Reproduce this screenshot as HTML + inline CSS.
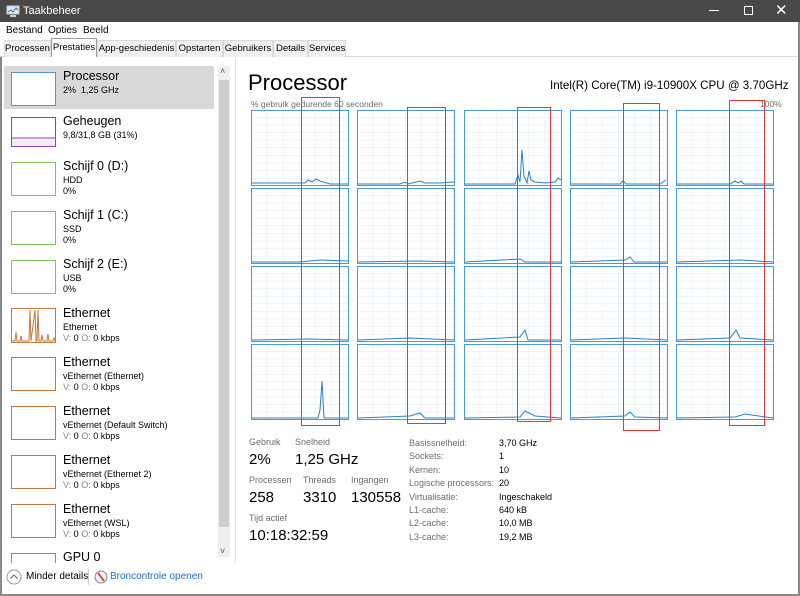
<!DOCTYPE html>
<html><head><meta charset="utf-8"><style>
*{margin:0;padding:0;box-sizing:border-box}
body{width:800px;height:596px;overflow:hidden;background:#fff;font-family:"Segoe UI","Liberation Sans",sans-serif;color:#000;position:relative}
.a{position:absolute;white-space:nowrap}
#title{left:0;top:0;width:800px;height:22px;background:#4a4847;color:#fff;font-size:11px}
#menu{top:22px;left:0;width:800px;height:16px;font-size:10px}
.tab{position:absolute;top:40px;height:17px;border:1px solid #d9d9d9;border-bottom:none;font-size:9.5px;padding-top:2px;background:#f0f0f0;text-align:center;overflow:hidden;white-space:nowrap}
.sm{font-size:9px}
.nm{font-size:12.5px}
.lbl{font-size:9px;color:#6d6d6d}
</style></head><body>
<div id="title" class="a">
 <svg class="a" style="left:6px;top:4px" width="14" height="14"><rect x="1" y="2" width="12" height="8" fill="#dbe8f5" stroke="#ccc"/><polyline points="2,8 5,6 7,8 10,4 12,6" fill="none" stroke="#2a7ad0"/><rect x="4" y="11" width="6" height="2" fill="#ccc"/></svg>
 <span class="a" style="left:23px;top:5px">Taakbeheer</span>
 <span class="a" style="left:709px;top:10px;width:10px;height:1px;background:#fff"></span>
 <span class="a" style="left:744px;top:6px;width:9px;height:9px;border:1px solid #fff"></span>
 <span class="a" style="left:775px;top:1px;font-size:15px">✕</span>
</div>
<div id="menu" class="a"><span class="a" style="left:6px;top:3px">Bestand</span><span class="a" style="left:48px;top:3px">Opties</span><span class="a" style="left:83px;top:3px">Beeld</span></div>
<div class="a" style="left:0;top:56px;width:800px;height:1px;background:#d9d9d9"></div>
<div class="tab" style="left:4px;width:47px">Processen</div>
<div class="tab" style="left:51px;top:38px;width:46px;height:19px;background:#fff;border-color:#9c9c9c;padding-top:3px">Prestaties</div>
<div class="tab" style="left:97px;width:79px">App-geschiedenis</div>
<div class="tab" style="left:176px;width:47px">Opstarten</div>
<div class="tab" style="left:223px;width:50px">Gebruikers</div>
<div class="tab" style="left:273px;width:35px">Details</div>
<div class="tab" style="left:308px;width:38px">Services</div>
<div class="a" style="left:0;top:57px;width:2px;height:539px;background:#888"></div>
<div class="a" style="left:798px;top:22px;width:2px;height:574px;background:#888"></div>
<div class="a" style="left:0;top:594px;width:800px;height:2px;background:#888"></div>
<div class="a" style="left:4px;top:66px;width:210px;height:43px;background:#d9d9d9"></div>
<div class="a" style="left:218px;top:66px;width:12px;height:491px;background:#f0f0f0"></div>
<div class="a" style="left:219px;top:80px;width:10px;height:447px;background:#cdcdcd"></div>
<span class="a" style="left:220px;top:66px;font-size:9px;color:#555">˄</span>
<span class="a" style="left:220px;top:546px;font-size:9px;color:#555">˅</span>
<div class="a" style="left:235px;top:57px;width:1px;height:506px;background:#e0e0e0"></div>

<div class="a" style="left:11px;top:72px;width:45px;height:34px;border:1px solid #4a9ad6;background:#fff"></div>
<div class="a nm" style="left:63px;top:69px">Processor</div><div class="a sm" style="left:63px;top:85px">2%&nbsp; 1,25 GHz</div>
<div class="a" style="left:11px;top:117px;width:45px;height:30px;border:1px solid #9a3cbf;background:linear-gradient(#fff 70%,#9a3cbf 70%,#9a3cbf 73%,#f4eef8 73%)"></div>
<div class="a nm" style="left:63px;top:114px">Geheugen</div><div class="a sm" style="left:63px;top:130px">9,8/31,8 GB (31%)</div>

<div class="a" style="left:11px;top:162px;width:45px;height:34px;border:1px solid #7fc45a"></div>
<div class="a nm" style="left:63px;top:159px">Schijf 0 (D:)</div><div class="a sm" style="left:63px;top:175px">HDD</div><div class="a sm" style="left:63px;top:186px">0%</div>
<div class="a" style="left:11px;top:211px;width:45px;height:34px;border:1px solid #7fc45a"></div>
<div class="a nm" style="left:63px;top:208px">Schijf 1 (C:)</div><div class="a sm" style="left:63px;top:224px">SSD</div><div class="a sm" style="left:63px;top:235px">0%</div>
<div class="a" style="left:11px;top:260px;width:45px;height:34px;border:1px solid #7fc45a"></div>
<div class="a nm" style="left:63px;top:257px">Schijf 2 (E:)</div><div class="a sm" style="left:63px;top:273px">USB</div><div class="a sm" style="left:63px;top:284px">0%</div>

<svg class="a" style="left:11px;top:308px" width="45" height="35"><rect x=".5" y=".5" width="44" height="34" fill="#fff" stroke="#c07a3a"/><polyline points="1,33 4,33 5,24 6,33 9,33 10,28 11,33 18,33 19,2 20,33 24,2 25,33 26,33 27,2 28,33 30,33 31,27 32,33 36,33 37,26 38,33 42,33 43,30 44,33" fill="none" stroke="#c07a3a"/></svg>
<div class="a nm" style="left:63px;top:306px">Ethernet</div><div class="a sm" style="left:63px;top:322px">Ethernet</div><div class="a sm" style="left:63px;top:333px"><span style="color:#888">V:</span> 0 <span style="color:#888">O:</span> 0 kbps</div>
<div class="a" style="left:11px;top:357px;width:45px;height:34px;border:1px solid #c07a3a"></div>
<div class="a nm" style="left:63px;top:355px">Ethernet</div><div class="a sm" style="left:63px;top:371px">vEthernet (Ethernet)</div><div class="a sm" style="left:63px;top:382px"><span style="color:#888">V:</span> 0 <span style="color:#888">O:</span> 0 kbps</div>
<div class="a" style="left:11px;top:406px;width:45px;height:34px;border:1px solid #c07a3a"></div>
<div class="a nm" style="left:63px;top:404px">Ethernet</div><div class="a sm" style="left:63px;top:420px">vEthernet (Default Switch)</div><div class="a sm" style="left:63px;top:431px"><span style="color:#888">V:</span> 0 <span style="color:#888">O:</span> 0 kbps</div>
<div class="a" style="left:11px;top:455px;width:45px;height:34px;border:1px solid #c07a3a"></div>
<div class="a nm" style="left:63px;top:453px">Ethernet</div><div class="a sm" style="left:63px;top:469px">vEthernet (Ethernet 2)</div><div class="a sm" style="left:63px;top:480px"><span style="color:#888">V:</span> 0 <span style="color:#888">O:</span> 0 kbps</div>
<div class="a" style="left:11px;top:504px;width:45px;height:34px;border:1px solid #c07a3a"></div>
<div class="a nm" style="left:63px;top:502px">Ethernet</div><div class="a sm" style="left:63px;top:518px">vEthernet (WSL)</div><div class="a sm" style="left:63px;top:529px"><span style="color:#888">V:</span> 0 <span style="color:#888">O:</span> 0 kbps</div>
<div class="a" style="left:11px;top:553px;width:45px;height:10px;border:1px solid #4a9ad6;border-bottom:none"></div>
<div class="a nm" style="left:63px;top:550px;height:13px;overflow:hidden">GPU 0</div>
<div class="a" style="left:2px;top:563px;width:796px;height:31px;background:#fff"></div>
<svg class="a" style="left:6px;top:569px" width="16" height="16"><circle cx="8" cy="8" r="7" fill="none" stroke="#999"/><polyline points="4.5,9.5 8,6 11.5,9.5" fill="none" stroke="#666"/></svg>
<div class="a" style="left:26px;top:571px;font-size:10px">Minder details</div>
<div class="a" style="left:88px;top:569px;width:1px;height:16px;background:#ccc"></div>
<svg class="a" style="left:94px;top:570px" width="14" height="14"><circle cx="7" cy="7" r="6" fill="#eee" stroke="#888"/><line x1="4" y1="3" x2="10" y2="11" stroke="#c33" stroke-width="1.5"/></svg>
<div class="a" style="left:110px;top:571px;font-size:10px;color:#1a6fc9">Broncontrole openen</div>

<div class="a" style="left:248px;top:70px;font-size:22px">Processor</div>
<div class="a" style="left:550px;top:79px;font-size:11.6px">Intel(R) Core(TM) i9-10900X CPU @ 3.70GHz</div>
<div class="a lbl" style="left:251px;top:99px;font-size:8.5px">% gebruik gedurende 60 seconden</div>
<div class="a lbl" style="left:760px;top:99px;font-size:8.5px">100%</div>
<svg class="a" style="left:0;top:0" width="800" height="596">
<defs><pattern id="g" width="16.2" height="7.6" patternUnits="userSpaceOnUse"><path d="M16.2 0V7.6M0 7.6H16.2" stroke="#dcebf7" stroke-width="1" fill="none"/></pattern>
<g id="c"><rect x=".5" y=".5" width="97" height="75" fill="url(#g)" stroke="#4a9ad6"/></g></defs>
<g>
<use href="#c" x="251" y="110"/><use href="#c" x="357" y="110"/><use href="#c" x="464" y="110"/><use href="#c" x="570" y="110"/><use href="#c" x="676" y="110"/>
<use href="#c" x="251" y="188"/><use href="#c" x="357" y="188"/><use href="#c" x="464" y="188"/><use href="#c" x="570" y="188"/><use href="#c" x="676" y="188"/>
<use href="#c" x="251" y="266"/><use href="#c" x="357" y="266"/><use href="#c" x="464" y="266"/><use href="#c" x="570" y="266"/><use href="#c" x="676" y="266"/>
<use href="#c" x="251" y="344"/><use href="#c" x="357" y="344"/><use href="#c" x="464" y="344"/><use href="#c" x="570" y="344"/><use href="#c" x="676" y="344"/>
</g>
<g fill="none" stroke="#2a80c8" stroke-width="1">
<polyline points="252,183 290,183 305,183 308,180 312,182 316,179 320,181 330,184 348,184"/>
<polyline points="358,184 400,184 405,182 408,184 420,181 425,183 440,183 454,182"/>
<polyline points="465,184 515,184 518,175 520,182 522,150 524,176 527,183 529,171 531,180 535,182 545,183 555,182 558,178 561,180"/>
<polyline points="571,184 620,184 623,181 626,184 660,184 666,180"/>
<polyline points="677,184 730,184 735,181 738,183 741,181 744,184 773,184"/>
<polyline points="252,262 300,262 320,260 348,261"/><polyline points="358,262 420,261 454,262"/><polyline points="465,262 520,259 525,262 561,262"/><polyline points="571,262 625,260 630,257 634,262 667,262"/><polyline points="677,262 740,260 773,262"/>
<polyline points="252,340 310,339 348,340"/><polyline points="358,340 410,338 454,340"/><polyline points="465,340 520,337 525,330 528,340 561,340"/><polyline points="571,340 625,338 667,340"/><polyline points="677,340 730,338 736,330 740,338 773,340"/>
<polyline points="252,418 318,418 320,410 322,381 324,418 348,418"/><polyline points="358,418 410,416 420,413 425,418 454,418"/><polyline points="465,418 520,417 525,411 535,416 561,418"/><polyline points="571,418 625,416 630,412 635,417 667,418"/><polyline points="677,418 735,417 745,414 773,418"/>
</g>
<g fill="none" stroke="#e0393e" stroke-width="1">
<rect x="301.5" y="97.5" width="38" height="328"/><rect x="407.5" y="107.5" width="38" height="316"/><rect x="517.5" y="107.5" width="33" height="314"/><rect x="623.5" y="103.5" width="36" height="327"/><rect x="729.5" y="100.5" width="35" height="325"/>
</g></svg>

<div class="a lbl" style="left:249px;top:437px">Gebruik</div><div class="a lbl" style="left:295px;top:437px">Snelheid</div>
<div class="a" style="left:249px;top:451px;font-size:15px">2%</div><div class="a" style="left:295px;top:451px;font-size:15px">1,25 GHz</div>
<div class="a lbl" style="left:249px;top:475px">Processen</div><div class="a lbl" style="left:303px;top:475px">Threads</div><div class="a lbl" style="left:351px;top:475px">Ingangen</div>
<div class="a" style="left:249px;top:489px;font-size:15px">258</div><div class="a" style="left:303px;top:489px;font-size:15px">3310</div><div class="a" style="left:351px;top:489px;font-size:15px">130558</div>
<div class="a lbl" style="left:249px;top:513px">Tijd actief</div>
<div class="a" style="left:249px;top:527px;font-size:15px">10:18:32:59</div>
<div class="a lbl" style="left:409px;top:437px;line-height:13.4px">Basissnelheid:<br>Sockets:<br>Kernen:<br>Logische processors:<br>Virtualisatie:<br>L1-cache:<br>L2-cache:<br>L3-cache:</div>
<div class="a" style="left:499px;top:437px;font-size:9px;line-height:13.4px">3,70 GHz<br>1<br>10<br>20<br>Ingeschakeld<br>640 kB<br>10,0 MB<br>19,2 MB</div>
</body></html>
